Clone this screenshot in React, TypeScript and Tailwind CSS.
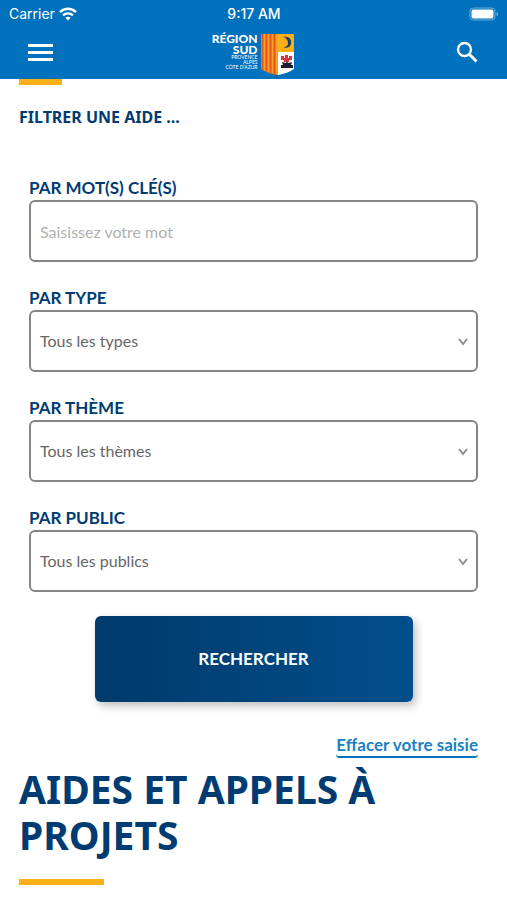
import { useState } from "react"

const filters = [
    { id: "type", label: "PAR TYPE", placeholder: "Tous les types" },
    { id: "theme", label: "PAR THÈME", placeholder: "Tous les thèmes" },
    { id: "public", label: "PAR PUBLIC", placeholder: "Tous les publics" },
]

function WifiIcon() {
    return (
        <svg viewBox="0 0 18 14" className="h-[14px] w-[18px]" fill="none" stroke="white" strokeWidth="2.3" aria-hidden="true">
            <path d="M1 5.1C5.6.6 12.4.6 17 5.1" />
            <path d="M4 8.3c2.8-2.7 7.2-2.7 10 0" />
            <path d="M6.3 10.8c1.5-1.4 3.9-1.4 5.4 0L9 13.6z" fill="white" stroke="none" />
        </svg>
    )
}

function BatteryIcon() {
    return (
        <svg viewBox="0 0 30 14" className="h-[14px] w-[30px]" aria-hidden="true">
            <rect x="1" y="1" width="25" height="12" rx="3.5" fill="none" stroke="#6fb1e0" />
            <rect x="2.5" y="2.5" width="22" height="9" rx="2" fill="white" />
            <path d="M27.5 5v4c1-.3 1.6-1.1 1.6-2s-.6-1.7-1.6-2z" fill="#6fb1e0" />
        </svg>
    )
}

function RegionLogo() {
    return (
        <span className="flex w-[84px] gap-1">
            <span className="flex flex-1 flex-col items-end pt-px font-black whitespace-nowrap">
                <span className="text-[12px] leading-[11px]">RÉGION</span>
                <span className="text-[12px] leading-[11px]">SUD</span>
                <span className="text-[5px] leading-[5px] font-normal">PROVENCE</span>
                <span className="text-[5px] leading-[5px] font-normal">ALPES</span>
                <span className="text-[5px] leading-[5px] font-normal">CÔTE D’AZUR</span>
            </span>
            <svg viewBox="50 0 34 44" className="h-[44px] w-[34px] shrink-0" aria-hidden="true">
                <path d="M50 2h17v41c-6-1-13-3-17-6z" fill="#f9a51a" />
                <path d="M51.5 2v36M55.5 2v38M59.5 2v40M63.5 2v41" stroke="#e4512b" strokeWidth="2" />
                <path d="M67 2h16v18H67z" fill="#fbb116" />
                <path d="M67 20h16v17c-4 3-10 5-16 6z" fill="white" />
                <path d="M73 5c5-1 8 3 7 7-.8 3-4 5-8 3 3 0 5-1 5-4 0-2-1-4-4-6z" fill="#17436f" />
                <path d="M72 5l3-1v3z" fill="#e4512b" />
                <path d="M70 24h3v2h1v-3h3v3h1v-2h3v4h-3v2h-5v-2h-3z" fill="#dc3140" />
                <path d="M71 30l4 1 1-2 1 2 4-1-1 3h2v3H70v-3h2z" fill="#201c2b" />
            </svg>
        </span>
    )
}

function SearchIcon() {
    return (
        <svg viewBox="0 0 24 24" className="size-6" fill="none" stroke="white" aria-hidden="true">
            <circle cx="9.5" cy="9.5" r="6.5" strokeWidth="2.4" />
            <path d="M14 14l7.5 7.5" strokeWidth="3" />
        </svg>
    )
}

function Chevron() {
    return (
        <svg
            viewBox="0 0 10 8"
            className="pointer-events-none absolute top-[28px] right-[10px] h-2 w-[10px]"
            fill="none"
            stroke="#8c8c8c"
            strokeWidth="2"
            aria-hidden="true"
        >
            <path d="M1 1l4 5 4-5" />
        </svg>
    )
}

export default function App() {
    const [keyword, setKeyword] = useState("")

    return (
        <div className="min-h-screen bg-white font-['Lato',sans-serif] text-[#003c71]">
            <header className="h-[79px] bg-[#0071bc] text-white">
                {/* Phone status bar */}
                <div className="grid h-7 grid-cols-3 items-center pl-[9px] pr-2 font-['Inter',sans-serif] text-sm">
                    <div className="flex items-center gap-1">
                        <span>Carrier</span>
                        <WifiIcon />
                    </div>
                    <span className="text-center font-medium">9:17 AM</span>
                    <div className="flex justify-end">
                        <BatteryIcon />
                    </div>
                </div>

                {/* Navigation */}
                <div className="grid h-12 grid-cols-3 items-center px-7">
                    <button aria-label="Menu" className="flex w-[25px] flex-col gap-1">
                        <span className="h-[3px] w-full bg-white" />
                        <span className="h-[3px] w-full bg-white" />
                        <span className="h-[3px] w-full bg-white" />
                    </button>
                    <a href="#" aria-label="Région Sud" className="justify-self-center pt-1">
                        <RegionLogo />
                    </a>
                    <button aria-label="Rechercher" className="justify-self-end">
                        <SearchIcon />
                    </button>
                </div>
            </header>

            <main className="px-[19px] pb-4">
                <div className="h-[6px] w-[43px] bg-[#fcaf17]" />
                <h2 className="mt-5 font-['Noto_Sans',sans-serif] text-base leading-6 font-bold">
                    FILTRER UNE AIDE ...
                </h2>

                <form className="mx-[10px] mt-[47px]" onSubmit={(e) => e.preventDefault()}>
                    <div className="mb-6">
                        <label htmlFor="keyword" className="block text-[17px] leading-6 font-bold">
                            PAR MOT(S) CLÉ(S)
                        </label>
                        <input
                            id="keyword"
                            type="text"
                            value={keyword}
                            onChange={(e) => setKeyword(e.target.value)}
                            placeholder="Saisissez votre mot"
                            className="block h-[62px] w-full rounded-md border-2 border-[#858585] px-[9px] text-base text-[#666] placeholder:text-[#b0b0b0]"
                        />
                    </div>

                    {filters.map((filter) => (
                        <div key={filter.id} className="mb-6">
                            <label htmlFor={filter.id} className="block text-[17px] leading-6 font-bold">
                                {filter.label}
                            </label>
                            <div className="relative">
                                <select
                                    id={filter.id}
                                    className="block h-[62px] w-full appearance-none rounded-md border-2 border-[#858585] bg-white px-[9px] text-base text-[#666]"
                                >
                                    <option>{filter.placeholder}</option>
                                </select>
                                <Chevron />
                            </div>
                        </div>
                    ))}

                    <button
                        type="submit"
                        className="mx-auto block h-[86px] w-[318px] rounded-md bg-linear-to-r from-[#003a6a] to-[#004f8d] text-[17px] font-bold text-white shadow-[3px_4px_8px_rgba(0,0,0,0.25)]"
                    >
                        RECHERCHER
                    </button>

                    <div className="mt-8 flex justify-end">
                        <button
                            type="reset"
                            onClick={() => setKeyword("")}
                            className="rounded-sm border-b-2 border-[#0071bc] text-[17px] leading-[22px] font-bold text-[#1d7fc3]"
                        >
                            Effacer votre saisie
                        </button>
                    </div>
                </form>

                <h1 className="mt-2 font-['Noto_Sans',sans-serif] text-[39px] leading-[46px] font-bold">
                    AIDES ET APPELS À PROJETS
                </h1>
                <div className="mt-[21px] h-[6px] w-[85px] bg-[#fcaf17]" />
            </main>
        </div>
    )
}
